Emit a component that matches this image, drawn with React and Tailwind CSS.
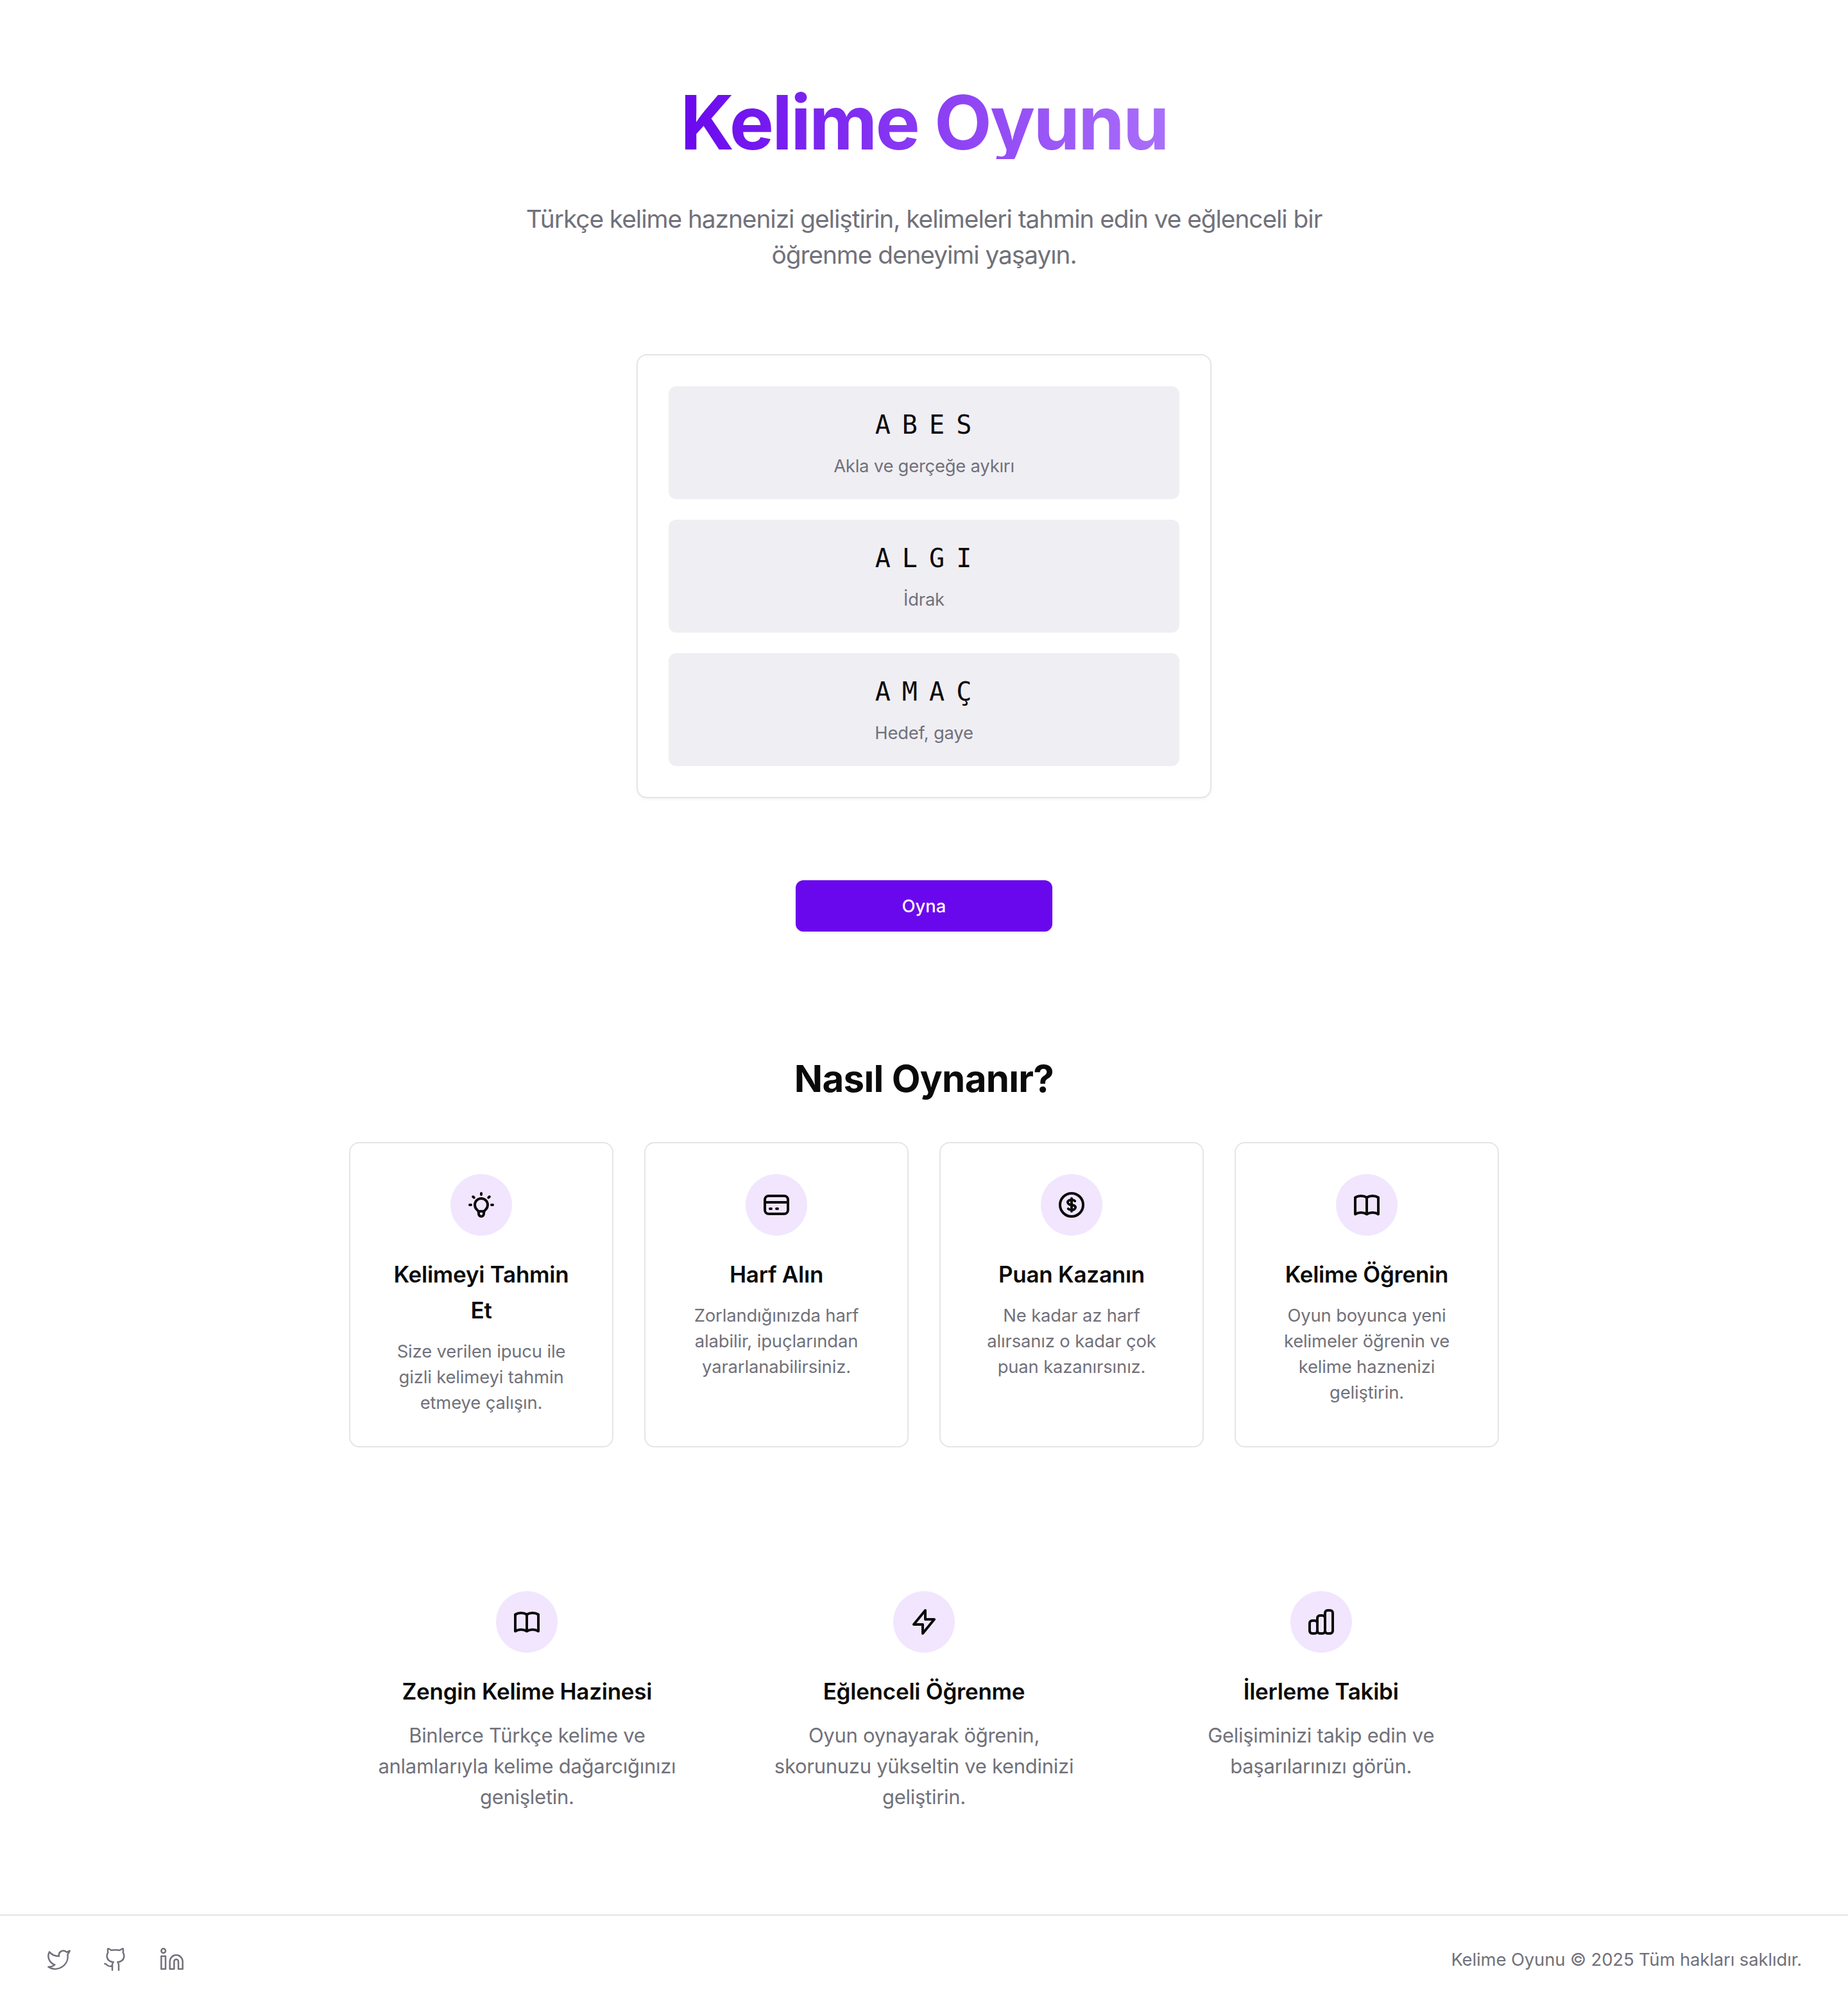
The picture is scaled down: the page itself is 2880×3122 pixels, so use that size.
import { Github, Linkedin, Twitter } from "lucide-react";

const BULB =
  "M9.663 17h4.673M12 3v1m6.364 1.636l-.707.707M21 12h-1M4 12H3m3.343-5.657l-.707-.707m2.828 9.9a5 5 0 117.072 0l-.548.547A3.374 3.374 0 0014 18.469V19a2 2 0 11-4 0v-.531c0-.895-.356-1.754-.988-2.386l-.548-.547z";
const CARD =
  "M3 10h18M7 15h1m4 0h1m-7 4h12a3 3 0 003-3V8a3 3 0 00-3-3H6a3 3 0 00-3 3v8a3 3 0 003 3z";
const COIN =
  "M12 8c-1.657 0-3 .895-3 2s1.343 2 3 2 3 .895 3 2-1.343 2-3 2m0-8c1.11 0 2.08.402 2.599 1M12 8V7m0 1v8m0 0v1m0-1c-1.11 0-2.08-.402-2.599-1M21 12a9 9 0 11-18 0 9 9 0 0118 0z";
const BOOK =
  "M12 6.253v13m0-13C10.832 5.477 9.246 5 7.5 5S4.168 5.477 3 6.253v13C4.168 18.477 5.754 18 7.5 18s3.332.477 4.5 1.253m0-13C13.168 5.477 14.754 5 16.5 5c1.747 0 3.332.477 4.5 1.253v13C19.832 18.477 18.247 18 16.5 18c-1.746 0-3.332.477-4.5 1.253";
const BOLT = "M13 10V3L4 14h7v7l9-11h-7z";
const CHART =
  "M9 19v-6a2 2 0 00-2-2H5a2 2 0 00-2 2v6a2 2 0 002 2h2a2 2 0 002-2zm0 0V9a2 2 0 012-2h2a2 2 0 012 2v10m-6 0a2 2 0 002 2h2a2 2 0 002-2m0 0V5a2 2 0 012-2h2a2 2 0 012 2v14a2 2 0 01-2 2h-2a2 2 0 01-2-2z";

const words = [
  { word: "A B E S", hint: "Akla ve gerçeğe aykırı" },
  { word: "A L G I", hint: "İdrak" },
  { word: "A M A Ç", hint: "Hedef, gaye" },
];

const steps = [
  { icon: BULB, title: "Kelimeyi Tahmin Et", text: "Size verilen ipucu ile gizli kelimeyi tahmin etmeye çalışın." },
  { icon: CARD, title: "Harf Alın", text: "Zorlandığınızda harf alabilir, ipuçlarından yararlanabilirsiniz." },
  { icon: COIN, title: "Puan Kazanın", text: "Ne kadar az harf alırsanız o kadar çok puan kazanırsınız." },
  { icon: BOOK, title: "Kelime Öğrenin", text: "Oyun boyunca yeni kelimeler öğrenin ve kelime haznenizi geliştirin." },
];

const features = [
  { icon: BOOK, title: "Zengin Kelime Hazinesi", text: "Binlerce Türkçe kelime ve anlamlarıyla kelime dağarcığınızı genişletin." },
  { icon: BOLT, title: "Eğlenceli Öğrenme", text: "Oyun oynayarak öğrenin, skorunuzu yükseltin ve kendinizi geliştirin." },
  { icon: CHART, title: "İlerleme Takibi", text: "Gelişiminizi takip edin ve başarılarınızı görün." },
];

function IconCircle({ path }) {
  return (
    <div className="flex size-24 shrink-0 items-center justify-center rounded-full bg-[#f1e6fe]">
      <svg
        className="size-12"
        viewBox="0 0 24 24"
        fill="none"
        stroke="currentColor"
        strokeWidth="2"
        strokeLinecap="round"
        strokeLinejoin="round"
      >
        <path d={path} />
      </svg>
    </div>
  );
}

function ItemTitle({ children }) {
  return (
    <h3 className="mt-8 text-[35px] leading-[56px] font-semibold tracking-[-0.007em]">{children}</h3>
  );
}

export default function App() {
  return (
    <div className="flex min-h-[3122px] flex-col bg-white font-['Inter',sans-serif] text-[#0a0a0a]">
      <main className="mx-auto flex w-[1792px] flex-1 flex-col items-center pt-32 text-center">
        <h1 className="h-[120px] bg-linear-to-r/srgb from-[#6a08ed] to-[#aa70f9] bg-clip-text text-[116.5px] leading-[126px] font-bold tracking-[-0.0236em] text-transparent">
          Kelime Oyunu
        </h1>
        <p className="mt-[65px] w-[1280px] text-[38.8px] leading-[56px] tracking-[-0.0268em] text-[#71717a]">
          Türkçe kelime haznenizi geliştirin, kelimeleri tahmin edin ve eğlenceli bir öğrenme deneyimi yaşayın.
        </p>

        <section className="mt-[127px] flex w-[896px] flex-col gap-8 rounded-2xl border-2 border-[#e5e5e5] p-12 shadow-[0_2px_4px_0_rgb(0_0_0/0.05)]">
          {words.map(({ word, hint }) => (
            <div key={word} className="rounded-xl bg-[#efeef3] p-8">
              <p className="pr-[5px] font-['DejaVu_Sans_Mono',monospace] text-[40px] leading-[56px] tracking-[-3px]">{word}</p>
              <p className="mt-4 text-[27.4px] leading-[40px] tracking-[-0.008em] text-[#71717a]">{hint}</p>
            </div>
          ))}
        </section>

        <button className="mt-32 flex h-20 w-[400px] items-center justify-center rounded-xl bg-[#6a08ed] text-[27.4px] leading-[40px] font-medium text-[#fafafa] shadow-[0_2px_4px_0_rgb(0_0_0/0.05)]">
          Oyna
        </button>

        <h2 className="mt-[193px] text-[58.2px] leading-[72px] font-bold tracking-[-0.012em]">Nasıl Oynanır?</h2>
        <section className="mt-[63px] grid w-full grid-cols-4 gap-12">
          {steps.map(({ icon, title, text }) => (
            <div key={title} className="flex flex-col items-center rounded-2xl border-2 border-[#e5e5e5] p-12">
              <IconCircle path={icon} />
              <ItemTitle>{title}</ItemTitle>
              <p className="mt-4 text-[27.4px] leading-[40px] tracking-[-0.005em] text-[#71717a]">{text}</p>
            </div>
          ))}
        </section>

        <section className="mt-56 grid w-full grid-cols-3 gap-16">
          {features.map(({ icon, title, text }) => (
            <div key={title} className="flex flex-col items-center px-8">
              <IconCircle path={icon} />
              <ItemTitle>{title}</ItemTitle>
              <p className="mt-[17px] text-[31px] leading-[48px] tracking-[-0.009em] text-[#71717a]">{text}</p>
            </div>
          ))}
        </section>
      </main>

      <footer className="flex h-[138px] items-center justify-between border-t-2 border-[#e5e5e5] px-[72px] text-[#71717a]">
        <div className="flex gap-12">
          <Twitter size={40} strokeWidth={1.5} />
          <Github size={40} strokeWidth={1.5} />
          <Linkedin size={40} strokeWidth={1.5} />
        </div>
        <p className="text-[27.4px] leading-[40px] tracking-[-0.0035em]">Kelime Oyunu © 2025 Tüm hakları saklıdır.</p>
      </footer>
    </div>
  );
}
